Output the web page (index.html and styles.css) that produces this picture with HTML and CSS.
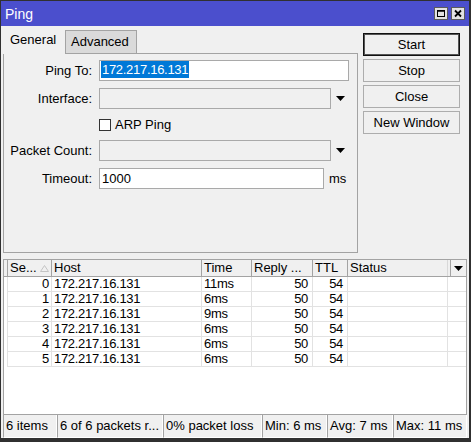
FILE: index.html
```html
<html>
  <head>
    <title>Ping</title>
    <link rel="stylesheet" href="styles.css">
  </head>
  <body>
    <div class="window">
      <div class="titlebar">
        <span class="title">Ping</span>
        <svg class="tbtn" width="14" height="13" viewBox="0 0 14 13">
          <rect x="0.5" y="0.5" width="13" height="12" fill="#e3e3e3" stroke="#5c5c5c"/>
          <rect x="3.5" y="3.5" width="7" height="6" fill="none" stroke="#000"/>
          <line x1="3" y1="4" x2="11" y2="4" stroke="#000" stroke-width="1.5"/>
        </svg>
        <svg class="tbtn" width="14" height="13" viewBox="0 0 14 13">
          <rect x="0.5" y="0.5" width="13" height="12" fill="#e3e3e3" stroke="#5c5c5c"/>
          <path d="M4 3.5 L10 9.5 M10 3.5 L4 9.5" stroke="#000" stroke-width="1.8"/>
        </svg>
      </div>

      <div class="content">
        <div class="top">
          <div class="tabs-area">
            <div class="tabs">
              <div class="tab active">General</div>
              <div class="tab">Advanced</div>
            </div>
            <div class="panel">
              <div class="form">
                <label>Ping To:</label>
                <div class="field">
                  <div class="input ping-to"><span class="sel">172.217.16.131</span></div>
                </div>

                <label>Interface:</label>
                <div class="field">
                  <div class="input combo disabled"></div>
                  <svg class="arrow" width="9" height="5" viewBox="0 0 9 5"><polygon points="0,0 9,0 4.5,5" fill="#000"/></svg>
                </div>

                <span></span>
                <div class="field check-row">
                  <span class="checkbox"></span>
                  <span>ARP Ping</span>
                </div>

                <label>Packet Count:</label>
                <div class="field">
                  <div class="input combo disabled"></div>
                  <svg class="arrow" width="9" height="5" viewBox="0 0 9 5"><polygon points="0,0 9,0 4.5,5" fill="#000"/></svg>
                </div>

                <label>Timeout:</label>
                <div class="field">
                  <div class="input timeout">1000</div>
                  <span class="unit">ms</span>
                </div>
              </div>
            </div>
          </div>

          <div class="buttons">
            <div class="btn default">Start</div>
            <div class="btn">Stop</div>
            <div class="btn">Close</div>
            <div class="btn">New Window</div>
          </div>
        </div>

        <div class="list">
          <div class="row head">
            <div></div>
            <div class="sort">Se...
              <svg width="9" height="7" viewBox="0 0 9 7"><polygon points="4.5,0.5 8.5,6.5 0.5,6.5" fill="none" stroke="#c4c4c4"/></svg>
            </div>
            <div>Host</div>
            <div>Time</div>
            <div>Reply ...</div>
            <div>TTL</div>
            <div>Status</div>
            <div class="menu">
              <span class="menu-btn">
                <svg width="9" height="5" viewBox="0 0 9 5"><polygon points="0,0 9,0 4.5,5" fill="#000"/></svg>
              </span>
            </div>
          </div>

          <div class="row item"><div></div><div class="num">0</div><div>172.217.16.131</div><div>11ms</div><div class="num pad">50</div><div class="num pad">54</div><div></div><div></div></div>
          <div class="row item"><div></div><div class="num">1</div><div>172.217.16.131</div><div>6ms</div><div class="num pad">50</div><div class="num pad">54</div><div></div><div></div></div>
          <div class="row item"><div></div><div class="num">2</div><div>172.217.16.131</div><div>9ms</div><div class="num pad">50</div><div class="num pad">54</div><div></div><div></div></div>
          <div class="row item"><div></div><div class="num">3</div><div>172.217.16.131</div><div>6ms</div><div class="num pad">50</div><div class="num pad">54</div><div></div><div></div></div>
          <div class="row item"><div></div><div class="num">4</div><div>172.217.16.131</div><div>6ms</div><div class="num pad">50</div><div class="num pad">54</div><div></div><div></div></div>
          <div class="row item"><div></div><div class="num">5</div><div>172.217.16.131</div><div>6ms</div><div class="num pad">50</div><div class="num pad">54</div><div></div><div></div></div>
        </div>

        <div class="statusbar">
          <div class="cell s1">6 items</div>
          <div class="cell s2">6 of 6 packets r...</div>
          <div class="cell s3">0% packet loss</div>
          <div class="cell s4">Min: 6 ms</div>
          <div class="cell s5">Avg: 7 ms</div>
          <div class="cell s6">Max: 11 ms</div>
        </div>
      </div>
    </div>
  </body>
</html>
```

FILE: styles.css
```css
* {
  box-sizing: border-box;
}
body {
  margin: 0;
  font-family: 'Liberation Sans', Arial, sans-serif;
  font-size: 13px;
  color: #000;
  background: #f0f0f0;
}
.window {
  width: 471px;
  height: 442px;
  display: flex;
  flex-direction: column;
  border: 1px solid #303030;
  border-right-width: 2px;
  border-bottom-width: 4px;
  background: #f0f0f0;
}

/* title bar */
.titlebar {
  height: 25px;
  display: flex;
  align-items: center;
  padding: 0 4px 0 4px;
  background: #4b4fcd;
  color: #fff;
}
.title {
  flex: 1;
  font-size: 14px;
}
.tbtn {
  display: block;
  margin-left: 3px;
}

.content {
  flex: 1;
  display: flex;
  flex-direction: column;
  padding: 0 2px;
}

/* tabs + form */
.top {
  height: 233px;
  display: flex;
}
.tabs-area {
  width: 355px;
}
.tabs {
  height: 27px;
  display: flex;
  align-items: flex-end;
}
.tab {
  height: 23px;
  width: 72px;
  padding-left: 5px;
  line-height: 22px;
  background: #dadada;
  border: 1px solid #a3a3a3;
  border-bottom: none;
}
.tab.active {
  position: relative;
  width: 62px;
  height: 27px;
  margin-bottom: -1px;
  padding-left: 7px;
  line-height: 26px;
  background: #f0f0f0;
  border: none;
}
.panel {
  height: 200px;
  padding-top: 6px;
  border: 1px solid #a3a3a3;
}
.form {
  display: grid;
  grid-template-columns: 88px auto;
  column-gap: 7px;
  row-gap: 7px;
  align-items: center;
}
.form label {
  text-align: right;
}
.field {
  display: flex;
  align-items: center;
  height: 21px;
}
.input {
  height: 21px;
  padding-left: 1px;
  line-height: 19px;
  background: #fff;
  border: 1px solid #a9a9a9;
  white-space: nowrap;
}
.input.ping-to {
  width: 250px;
}
.input.combo {
  width: 232px;
}
.input.timeout {
  width: 225px;
  padding-left: 2px;
}
.input.disabled {
  background: #f0f0f0;
}
.sel {
  display: inline-block;
  line-height: 17px;
  padding: 0 1px;
  letter-spacing: -0.3px;
  background: #0078d7;
  color: #fff;
}
.arrow {
  margin-left: 5px;
}
.unit {
  margin-left: 5px;
}
.field.check-row {
  height: 17px;
}
.checkbox {
  width: 12px;
  height: 12px;
  margin-right: 4px;
  background: #fff;
  border: 1px solid #333;
}

/* side buttons */
.buttons {
  width: 97px;
  margin-left: 5px;
  padding-top: 7px;
  display: flex;
  flex-direction: column;
  gap: 3px;
}
.btn {
  height: 23px;
  line-height: 21px;
  text-align: center;
  background: #f0f0f0;
  border: 1px solid #adadad;
}
.btn.default {
  border-color: #111;
  box-shadow: inset 0 0 0 1px #555;
}

/* list */
.list {
  height: 156px;
  background: #fff;
  border: 1px solid #a3a3a3;
}
.row {
  display: grid;
  grid-template-columns: 3px 44px 150px 50px 61px 35px 100px 19px;
}
.row > div {
  white-space: nowrap;
  overflow: hidden;
}
.head {
  height: 17px;
  line-height: 16px;
  background: #f0f0f0;
  border-bottom: 1px solid #a3a3a3;
}
.head > div + div {
  padding-left: 2px;
  border-left: 1px solid #a3a3a3;
}
.head .sort {
  display: flex;
  align-items: center;
  justify-content: space-between;
  padding-right: 2px;
}
.head .menu {
  border-left-color: #d8d8d8;
  padding-left: 2px;
}
.menu-btn {
  display: flex;
  align-items: center;
  justify-content: center;
  height: 16px;
  border-left: 1px solid #a3a3a3;
}
.item {
  height: 15px;
  line-height: 14px;
  letter-spacing: -0.3px;
}
.item > div + div {
  padding-left: 2px;
  border-left: 1px solid #e2e2e2;
  border-bottom: 1px solid #e2e2e2;
}
.item .num {
  text-align: right;
  padding-right: 2px;
}
.item .num.pad {
  padding-right: 4px;
}

/* status bar */
.statusbar {
  height: 23px;
  display: flex;
}
.cell {
  padding-left: 2px;
  line-height: 22px;
  white-space: nowrap;
  overflow: hidden;
  border-left: 1px solid #a3a3a3;
  border-right: 1px solid #fff;
  border-bottom: 1px solid #fff;
}
.s1 { width: 54px; }
.s2 { width: 106px; }
.s3 { width: 99px; }
.s4 { width: 65px; }
.s5 { width: 66px; }
.s6 { flex: 1; }
```
